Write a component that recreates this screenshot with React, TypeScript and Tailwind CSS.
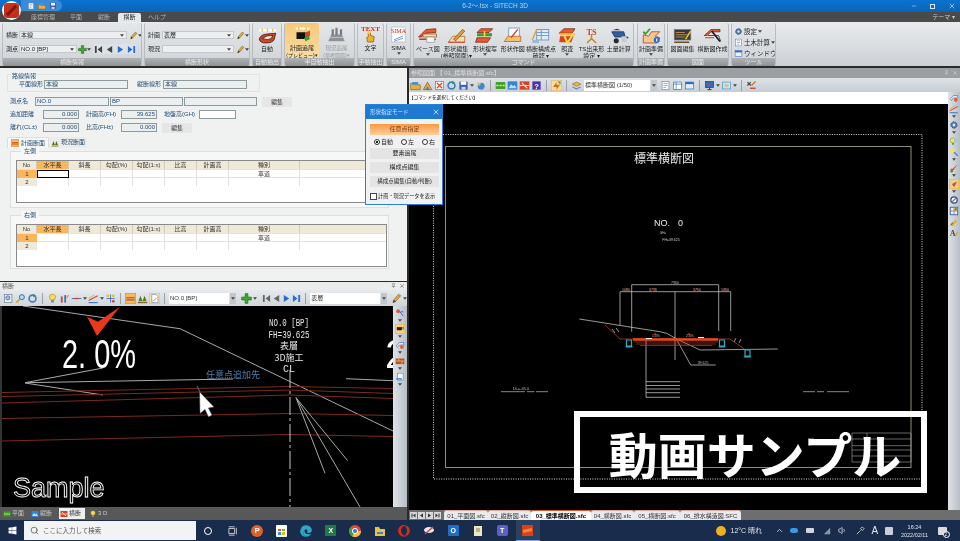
import React from "react";
import clsx from "clsx";
import { FaWindows, FaEdge, FaOpera } from "react-icons/fa";
import { Search, ChevronUp, Volume1, Minus, X, Pin } from "lucide-react";

// small 16x16 toolbar icons
const ICONS: Record<string, React.ReactNode> = {
  folder: (<><path d="M1 5h5l1 2h8v7H1z" fill="#e8b23c" stroke="#8a6a1c" /><path d="M3 3h9v4H3z" fill="#4a90d0" /></>),
  mount: (<><path d="M2 14L8 3l6 11z" fill="#f0a830" stroke="#8a5a10" /><path d="M5 14l3-5 3 5z" fill="#3a7fd0" /></>),
  pdf: (<><rect x="2" y="2" width="12" height="12" fill="#fff" stroke="#777" /><path d="M4 4l8 8M12 4l-8 8" stroke="#d8402a" strokeWidth="1.6" /></>),
  refresh: (<><circle cx="8" cy="8" r="5" fill="none" stroke="#3a80c0" strokeWidth="2.4" /><path d="M9 1l4 3-4 2z" fill="#2a9a4a" /></>),
  save: (<><rect x="2" y="2" width="12" height="12" rx="1" fill="#3b5fb0" /><rect x="4" y="2" width="8" height="5" fill="#fff" /><rect x="5" y="10" width="6" height="4" fill="#cfd6e6" /></>),
  globe: (<><circle cx="9" cy="9" r="5" fill="#3a8ad8" /><path d="M3 3l6 2-3 4z" fill="#e8c040" /></>),
  green: (<><rect x="1" y="3" width="14" height="10" fill="#3aa02c" /><path d="M2 8h3M6.5 8h3M11 8h3" stroke="#ffe860" strokeWidth="2" /></>),
  blue: (<><rect x="1" y="2" width="14" height="12" fill="#2f86d6" /><path d="M2 12l4-6 3 3 2-2 3 5z" fill="#bfe0f8" /></>),
  red: (<><rect x="1" y="2" width="14" height="12" fill="#d8402a" /><path d="M1 8h14M4 4l8 8" stroke="#f6e6c8" strokeWidth="1.6" /></>),
  help: (<><rect x="2" y="2" width="12" height="12" fill="#5030a8" /><text x="8" y="12.5" textAnchor="middle" fontSize="11" fontWeight="700" fill="#fff" fontFamily="Liberation Sans">?</text></>),
  arrowBox: (<><rect x="0" y="0" width="16" height="16" rx="2" fill="#f8dc9c" stroke="#c09a50" /><path d="M3 10l5-7v4h5l-5 7v-4z" fill="#d86a20" /><path d="M10 3h3v3" stroke="#2a9a4a" strokeWidth="1.6" fill="none" /></>),
  layers: (<><path d="M2 6l6-3 6 3-6 3z" fill="#e8c040" stroke="#8a6a1c" /><path d="M2 10l6 3 6-3" fill="none" stroke="#4a80c0" strokeWidth="1.6" /></>),
  doc: (<><rect x="3" y="2" width="10" height="12" fill="#fff" stroke="#6888b8" /><path d="M5 5h6M5 8h6M5 11h4" stroke="#6888b8" /></>),
  table: (<><rect x="2" y="3" width="12" height="11" fill="#fff" stroke="#3a70b8" /><path d="M2 6h12M6 3v11" stroke="#3a70b8" /></>),
  win: (<><rect x="2" y="3" width="12" height="10" fill="#e8eef8" stroke="#3a70b8" /><rect x="2" y="3" width="12" height="3" fill="#2a6ac0" /></>),
  monitor: (<><rect x="2" y="2" width="12" height="9" fill="#2f6fc0" stroke="#1f3a78" /><path d="M8 11v3M5 14h6" stroke="#1f3a78" strokeWidth="1.4" /><path d="M5 5l5 2-3 2z" fill="#e04030" /></>),
  flag: (<><rect x="2" y="3" width="12" height="10" fill="#bfe4f8" stroke="#5a90c0" /><path d="M5 5l7 3-5 3z" fill="#e8c030" /></>),
  tools: (<><path d="M2 3l5 5M7 3l-5 5" stroke="#444" strokeWidth="1.6" /><path d="M8 8l6-6" stroke="#b8801c" strokeWidth="2" /><path d="M6 12h8" stroke="#d8402a" strokeWidth="2" /></>),
  inspect: (<><rect x="2" y="2" width="11" height="12" fill="#eef" stroke="#6a7a90" /><circle cx="7" cy="7" r="3" fill="#9cc4ec" stroke="#3a5a88" /></>),
  lens: (<><circle cx="10" cy="6" r="3.6" fill="#bcdcf8" stroke="#2a68b0" strokeWidth="1.4" /><path d="M7 9l-5 5" stroke="#e8a020" strokeWidth="2.4" /></>),
  bulb: (<><circle cx="8" cy="6" r="4.4" fill="#f6dc60" stroke="#b89018" /><rect x="6" y="10" width="4" height="4" fill="#8a8a8a" /></>),
  bars: (<><path d="M4 14V5" stroke="#d8402a" strokeWidth="2.6" /><path d="M9 14V3" stroke="#3a70c0" strokeWidth="2.6" /><path d="M11 7l3-4" stroke="#e8a020" strokeWidth="2" /></>),
  dash: (<><path d="M1 8h14" stroke="#3a70c0" strokeWidth="1.4" /><path d="M5 8h6" stroke="#d8402a" strokeWidth="2" /></>),
  slope: (<><path d="M1 11L14 4" stroke="#d8402a" strokeWidth="1.6" /><path d="M1 14h13" stroke="#3a70c0" strokeWidth="1.6" /><path d="M1 8L9 3" stroke="#e8a020" strokeWidth="1.2" /></>),
  dots: (<><path d="M8 2v12M2 8h12" stroke="#3a70c0" strokeWidth="1.2" /><circle cx="4" cy="4" r="2" fill="#e8c020" /><circle cx="12" cy="12" r="2" fill="#d8402a" /><circle cx="12" cy="4" r="2" fill="#e8c020" /></>),
  roadHl: (<><rect x="0" y="0" width="16" height="16" rx="1" fill="#f6ba5c" stroke="#b07a20" /><path d="M2 6h12v5H2z" fill="#c8501c" /><path d="M2 8.4h12" stroke="#f6e29c" /></>),
  people: (<><path d="M2 12l3-8 3 8zM8 12l3-8 3 8z" fill="#5a7a10" /><path d="M1 14h14" stroke="#7a5a1c" strokeWidth="1.6" /></>),
  docHl: (<><rect x="0" y="0" width="16" height="16" rx="1" fill="#f8e2ac" stroke="#c8a050" /><path d="M4 2h6l3 3v9H4z" fill="#fff" stroke="#6a88b8" /><path d="M6 12l5-5" stroke="#d86a20" strokeWidth="1.4" /></>),
  plus: (<><path d="M6 1h4v5h5v4h-5v5H6v-5H1V6h5z" fill="#3fa832" stroke="#1f6a1c" /></>),
  pencil: (<><path d="M3 14l1-4 7-8 3 2-7 8z" fill="#e8b030" stroke="#7a5a1c" /><path d="M3 14l1-4 3 2z" fill="#333" /></>),
  pointer: (<><circle cx="5" cy="5" r="3" fill="#e8503a" /><path d="M8 6l5 7M13 6h-4" stroke="#3a70c0" strokeWidth="1.6" /></>),
  roadCar: (<><rect x="0" y="0" width="16" height="16" rx="1" fill="#f8cf80" stroke="#c09a50" /><rect x="3" y="5" width="8" height="5" fill="#222" /><path d="M11 6l3-2v6z" fill="#3a8a3a" /></>),
  cross: (<><path d="M2 9l5-5h7v4H7l-3 4z" fill="#e8e8e8" stroke="#3a70b8" /><circle cx="11" cy="11" r="3" fill="#e85a30" /></>),
  brick: (<><rect x="1" y="4" width="14" height="9" fill="#b8541c" /><path d="M1 8h14M6 4v4M11 8v5" stroke="#f2d6a0" /></>),
  cloudDoc: (<><rect x="4" y="2" width="9" height="11" fill="#f6f8fc" stroke="#6a88b8" /><path d="M2 11h9" stroke="#3a8ad8" strokeWidth="2.4" /></>),
  gear: (<><circle cx="8" cy="8" r="5" fill="#5a80b8" stroke="#28406a" strokeWidth="1.6" strokeDasharray="2 1" /><circle cx="8" cy="8" r="2" fill="#e8eef8" /></>),
  bulbs: (<><circle cx="6" cy="7" r="4" fill="#f4e070" stroke="#8a9a4a" /><circle cx="11" cy="6" r="3" fill="#9acbe8" /><path d="M5 11h3v3H5z" fill="#5a9a4a" /></>),
  bulbFlag: (<><circle cx="6" cy="6" r="4" fill="#f6e070" /><path d="M8 8l6 6" stroke="#4a80c0" strokeWidth="2" /></>),
  check: (<><path d="M2 9l3 5 9-12-8 7z" fill="#e0401f" /><circle cx="4" cy="13" r="2" fill="#3aa02c" /></>),
  checkHl: (<><rect x="0" y="0" width="16" height="16" rx="1" fill="#f8d080" stroke="#c89a40" /><path d="M2 5h12l-4 5H6z" fill="#a8d8f0" /><path d="M5 8l3 5 5-9z" fill="#e0401f" /></>),
  ring: (<><circle cx="8" cy="8" r="5" fill="#fff" stroke="#3a4a68" strokeWidth="2" /><path d="M4 12l8-8" stroke="#5a7ab0" strokeWidth="2" /></>),
  grid: (<><rect x="2" y="2" width="12" height="12" fill="#e8f0e8" stroke="#2a6ab0" strokeWidth="1.4" /><path d="M2 8h12M8 2v12" stroke="#d8402a" /><circle cx="11" cy="5" r="2" fill="#3aa02c" /></>),
  brush: (<><path d="M3 13l7-9 3 3-7 8z" fill="#e8b030" /><path d="M3 13l3-4" stroke="#4a8a2a" strokeWidth="2" /></>),
  letter: (<><text x="6" y="13" textAnchor="middle" fontSize="12" fontWeight="700" fill="#3a3a4a" fontFamily="Liberation Serif">A</text><path d="M10 13l4-7" stroke="#d8a020" strokeWidth="2" /></>),
};

const Ico = ({ n, className = "w-[11px] h-[11px]" }: { n: string; className?: string }) => (
  <svg viewBox="0 0 16 16" className={clsx("shrink-0", className)}>
    {ICONS[n]}
  </svg>
);

const Drop = () => (
  <svg viewBox="0 0 6 4" className="w-[4px] h-[3px] shrink-0">
    <path d="M0 0h6L3 4z" fill="#444" />
  </svg>
);

const Sep = () => <div className="w-px h-[11px] bg-[#9aa0a8] mx-[3px] shrink-0" />;

// large ribbon pictures, 28x22
const BIG: Record<string, React.ReactNode> = {
  auto: (<><path d="M3 4h22" stroke="#fff" strokeWidth="3" /><path d="M7 2v4M14 2v4M21 2v4" stroke="#e8c020" strokeWidth="1.6" /><path d="M3 16q1-6 10-7l12-1-2 8q-2 5-11 5-8 0-9-5z" fill="#d8401f" stroke="#222" /><path d="M7 15q6-5 14-4l-2 4q-5 3-12 0z" fill="#f3e8d0" stroke="#222" /></>),
  plan: (<><path d="M5 3h18" stroke="#fff" strokeWidth="2.4" /><path d="M9 1v4M19 1v4" stroke="#e8c020" strokeWidth="1.6" /><rect x="6" y="8" width="12" height="9" fill="#111" /><path d="M18 8l6-2v7l-6 4z" fill="#d8401f" /><path d="M16 16l6-4 2 5-6 3z" fill="#3a9a3a" /></>),
  ground: (<><path d="M3 20l4-9h14l4 9z" fill="#8e9298" /><path d="M9 4v8M14 2v10M20 4v8" stroke="#7a7e84" strokeWidth="3" /><path d="M3 15h22" stroke="#c8ccd0" /></>),
  hand: (<><path d="M10 21l-1-6 2-1V8q2-1 3 0v4l5 2-1 7z" fill="#efb02c" stroke="#8a5e10" /><circle cx="12" cy="8" r="2.4" fill="#f6d050" /></>),
  sima: (<><rect x="5" y="1" width="18" height="20" fill="#fff" stroke="#b8bcc4" /><path d="M8 18l12-5M8 20l12-4" stroke="#4a80c0" /></>),
  base: (<><path d="M2 13L12 3l13-1v5L11 8l-5 5z" fill="#e85a30" stroke="#7a2010" /><rect x="8" y="9" width="18" height="4" fill="#f4e0b8" stroke="#9a5020" /><path d="M3 16h22" stroke="#b8401c" strokeWidth="2" /><rect x="13" y="13" width="10" height="7" fill="#f6f6f6" stroke="#999" /></>),
  edit: (<><path d="M3 20L9 12h16v8z" fill="#f1dcbc" stroke="#b45a20" /><path d="M10 16l12-13 3 2-12 13z" fill="#e8a030" stroke="#7a4a10" /><path d="M3 20h22" stroke="#d8401f" strokeWidth="1.6" /></>),
  copy: (<><path d="M4 7l5-5h16l-5 5z" fill="#e85a30" stroke="#7a2010" /><rect x="4" y="8" width="20" height="4" fill="#3a9a3a" /><path d="M4 14h18l-4 6H2z" fill="#e85a30" stroke="#7a2010" /><path d="M14 5v8" stroke="#f6e040" strokeWidth="2" /></>),
  draw: (<><rect x="9" y="1" width="14" height="13" fill="#fff" stroke="#5a88c0" /><path d="M3 19l5-7h17v7z" fill="#f3c070" stroke="#b45a20" /><path d="M12 14l9-11" stroke="#d8401f" strokeWidth="1.6" /></>),
  struct: (<><rect x="9" y="3" width="16" height="14" fill="#dfeaf8" stroke="#5a88c0" /><path d="M9 7h16M9 11h16M15 3v14" stroke="#5a88c0" /><path d="M3 17L9 3" stroke="#e8a030" strokeWidth="2" /><rect x="3" y="17" width="9" height="4" fill="#9ab8dc" /></>),
  check: (<><path d="M3 8l6-6h15l-4 6z" fill="#e85a30" stroke="#7a2010" /><rect x="4" y="8" width="20" height="3" fill="#f2c040" /><path d="M4 12h18l-3 8H3z" fill="#d8401f" /><path d="M10 12l4 9 8-13" fill="none" stroke="#f6e040" strokeWidth="2.6" /></>),
  ts: (<><text x="14" y="10" textAnchor="middle" fontSize="11" fontWeight="700" fill="#d8401f" fontFamily="Liberation Serif">TS</text><path d="M14 9v8M8 21l6-6 6 6" stroke="#c8861c" strokeWidth="2" fill="none" /></>),
  barrow: (<><path d="M5 6h16l2 7H9z" fill="#2f5fa0" stroke="#16305a" /><path d="M6 4l6-2 5 2z" fill="#4a3220" /><circle cx="11" cy="18" r="3.4" fill="#2a2a2a" /><path d="M23 13l4 1" stroke="#16305a" strokeWidth="2" /><rect x="18" y="12" width="7" height="8" fill="#c8ccd4" /></>),
  prep: (<><path d="M3 6l3 3 6-7" fill="none" stroke="#3aa02c" strokeWidth="2.4" /><path d="M3 21V10l7 2 4-6h11l-6 6 6 2-4 7z" fill="#f1c890" stroke="#b43a1c" /><circle cx="21" cy="17" r="4" fill="#2a6ac0" /><path d="M21 15v4" stroke="#fff" strokeWidth="1.6" /></>),
  sheet: (<><rect x="3" y="3" width="22" height="14" fill="#3a3a3a" stroke="#777" /><path d="M5 7h12M5 10h16M5 13h12" stroke="#d8a060" /><path d="M18 16l7-11" stroke="#e8c020" strokeWidth="2" /><path d="M3 20h20" stroke="#6a4a2a" strokeWidth="2" /></>),
  make: (<><path d="M3 11l9-8h12v3H12l-5 5z" fill="#e85a30" stroke="#7a2010" /><path d="M8 11h14l3 8" fill="none" stroke="#222" /><path d="M13 5l11 14" stroke="#222" strokeWidth="2.4" /><path d="M4 14h12" stroke="#d8401f" strokeWidth="1.4" /></>),
};

const Big = ({ n, className = "w-[21px] h-[17px]" }: { n: string; className?: string }) => (
  <svg viewBox="0 0 28 22" className={clsx("shrink-0", className)}>
    {BIG[n]}
  </svg>
);

const Group = ({
  title,
  className,
  children,
}: {
  title: string;
  className: string;
  children: React.ReactNode;
}) => (
  <div className={clsx("flex flex-col rounded-[2px] overflow-hidden bg-gradient-to-b from-[#e4e7ea] to-[#cfd3d7] border-x border-[#b8bcc0]", className)}>
    <div className="flex-1 flex min-h-0 overflow-hidden">{children}</div>
    <div className="h-[8px] shrink-0 bg-gradient-to-b from-[#b0b3b5] to-[#8f9294] text-[6px] leading-[8px] text-center text-[#e8e8e8] whitespace-nowrap">{title}</div>
  </div>
);

const RibBtn = ({
  n,
  label,
  sub,
  arrow,
  className,
}: {
  n: string;
  label: string;
  sub?: string;
  arrow?: boolean;
  className: string;
}) => (
  <div className={clsx("flex flex-col items-center pt-[4px] text-[6px] leading-[6.5px] whitespace-nowrap text-[#222]", className)}>
    <Big n={n} />
    <span className="mt-[2px]">{label}</span>
    {sub && <span>{sub}</span>}
    {arrow && <Drop />}
  </div>
);

const Combo = ({ className, text }: { className: string; text?: string }) => (
  <div className={clsx("flex items-center justify-between h-[8px] bg-[#eceef0] border border-[#c4c8cc] text-[6px] leading-[7px] text-[#222] pl-px pr-[2px] whitespace-nowrap", className)}>
    <span>{text}</span>
    <Drop />
  </div>
);

const Nav = ({ d, color }: { d: string; color: string }) => (
  <svg viewBox="0 0 10 10" className="w-[9px] h-[9px] shrink-0">
    <path d={d} fill={color} />
  </svg>
);
const FIRST = "M1 1h2v8H1zM9 1v8L4 5z";
const PREV = "M8 1v8L2 5z";
const NEXT = "M2 1v8l6-4z";
const LAST = "M1 1v8l5-4zM7 1h2v8H7z";

const Ribbon = () => (
  <div className="flex gap-[2px] h-[44px] pl-[2px] pt-px bg-gradient-to-b from-[#e9ecef] to-[#ccd0d4]">
    <Group title="横断情報" className="w-[140px]">
      <div className="flex flex-col gap-[6px] pl-[3px] pt-[8px] text-[6px] leading-[8px] text-[#222] whitespace-nowrap">
        <div className="flex items-center h-[8px]">
          <span className="w-[13px]">横断</span>
          <Combo className="w-[108px]" text="本線" />
          <Ico n="pencil" className="w-[9px] h-[9px] ml-[2px]" />
          <Drop />
        </div>
        <div className="flex items-center h-[8px]">
          <span className="w-[13px]">測点</span>
          <Combo className="w-[58px]" text="NO.0 [BP]" />
          <Ico n="plus" className="w-[9px] h-[9px] ml-[1px]" />
          <Drop />
          <div className="flex gap-[2px] ml-[2px] pl-px h-[10px] items-center bg-[#dde2e6] rounded-[2px]">
            <Nav d={FIRST} color="#444" />
            <Nav d={PREV} color="#444" />
            <Nav d={NEXT} color="#2a6ad8" />
            <Nav d={LAST} color="#2a6ad8" />
          </div>
        </div>
      </div>
    </Group>
    <Group title="横断形状" className="w-[106px]">
      <div className="flex flex-col gap-[6px] pl-[3px] pt-[8px] text-[6px] leading-[8px] text-[#222] whitespace-nowrap">
        <div className="flex items-center h-[8px]">
          <span className="w-[14px]">計画</span>
          <Combo className="w-[72px]" text="表層" />
          <Ico n="pencil" className="w-[9px] h-[9px] ml-[2px]" />
          <Drop />
        </div>
        <div className="flex items-center h-[8px]">
          <span className="w-[14px]">現況</span>
          <Combo className="w-[72px]" />
          <Ico n="pencil" className="w-[9px] h-[9px] ml-[2px]" />
          <Drop />
        </div>
      </div>
    </Group>
    <Group title="自動抽出" className="w-[30px]">
      <RibBtn n="auto" label="自動" className="w-full" />
    </Group>
    <Group title="半自動抽出" className="w-[71px]">
      <div className="flex flex-col items-center w-[34px] shrink-0 pt-[3px] rounded-[2px] bg-gradient-to-b from-[#f8c878] to-[#f6dca4] text-[6px] leading-[6.5px] text-[#222] whitespace-nowrap">
        <Big n="plan" />
        <span className="mt-[2px]">計画追尾</span>
        <span className="text-[5px]">(プレビュー)▾</span>
      </div>
      <div className="flex flex-col items-center flex-1 pt-[3px] text-[5.5px] leading-[6.5px] text-[#9a9a9a] whitespace-nowrap">
        <Big n="ground" />
        <span className="mt-[2px]">現況追尾</span>
        <span className="text-[5px]">(参考図面)▾</span>
      </div>
    </Group>
    <Group title="手動抽出" className="w-[27px]">
      <div className="flex flex-col items-center w-full pt-[3px] text-[6px] leading-[7px] text-[#222]">
        <div className="relative h-[17px] w-[22px] flex justify-center">
          <Big n="hand" />
          <span className="absolute -top-[1px] left-0 right-0 text-center font-['Liberation_Serif',serif] font-bold text-[7px] leading-[8px] text-[#e02a10]">TEXT</span>
        </div>
        <span className="mt-[2px]">文字</span>
      </div>
    </Group>
    <Group title="SIMA" className="w-[25px]">
      <div className="flex flex-col items-center w-full pt-[3px] text-[6px] leading-[7px] text-[#222]">
        <div className="relative h-[17px] w-[22px] flex justify-center">
          <Big n="sima" />
          <span className="absolute top-[2px] left-0 right-0 text-center font-['Liberation_Serif',serif] text-[6px] leading-[7px] text-[#d81a10]">SIMA</span>
        </div>
        <span className="mt-[2px]">SIMA</span>
        <Drop />
      </div>
    </Group>
    <Group title="コマンド" className="w-[221px]">
      <RibBtn n="base" label="ベース図" arrow className="w-[28px]" />
      <RibBtn n="edit" label="形状編集" sub="(参照図面)▾" className="w-[29px]" />
      <RibBtn n="copy" label="形状複写" arrow className="w-[29px]" />
      <RibBtn n="draw" label="形状作図" className="w-[27px]" />
      <RibBtn n="struct" label="横断構成点" sub="確認 ▾" className="w-[30px]" />
      <RibBtn n="check" label="照査" arrow className="w-[23px]" />
      <RibBtn n="ts" label="TS出来形" sub="設定 ▾" className="w-[26px]" />
      <RibBtn n="barrow" label="土量計算" className="w-[29px]" />
    </Group>
    <Group title="計画準備" className="w-[28px] ml-px">
      <RibBtn n="prep" label="計画準備" arrow className="w-full" />
    </Group>
    <Group title="図面" className="w-[62px]">
      <RibBtn n="sheet" label="図面編集" className="w-[30px]" />
      <RibBtn n="make" label="横断図作成" className="w-[32px]" />
    </Group>
    <Group title="ツール" className="w-[45px]">
      <div className="flex flex-col gap-[2px] pl-[2px] pt-[4px] text-[6.5px] leading-[9px] text-[#222] whitespace-nowrap">
        <div className="flex items-center gap-[1px]"><Ico n="gear" className="w-[9px] h-[9px]" />設定 <Drop /></div>
        <div className="flex items-center gap-[1px]"><Ico n="doc" className="w-[9px] h-[9px]" />土木計算 <Drop /></div>
        <div className="flex items-center gap-[1px]"><Ico n="win" className="w-[9px] h-[9px]" />ウィンドウ <Drop /></div>
      </div>
    </Group>
  </div>
);

const Field = ({
  className,
  children,
  white,
  right,
}: {
  className: string;
  children?: React.ReactNode;
  white?: boolean;
  right?: boolean;
}) => (
  <div
    className={clsx(
      "h-[9px] shrink-0 border border-[#8c9a9a] text-[6px] leading-[7px] text-[#1f4a70] px-px whitespace-nowrap",
      white ? "bg-white" : "bg-[#eceff0]",
      right && "text-right",
      className,
    )}
  >
    {children}
  </div>
);

const Lbl = ({ className, children }: { className: string; children: React.ReactNode }) => (
  <span className={clsx("shrink-0 text-[6px] leading-[9px] text-[#1f4a70] whitespace-nowrap", className)}>{children}</span>
);

const EditBtn = ({ className }: { className: string }) => (
  <div className={clsx("h-[10px] shrink-0 bg-[#e6e6e6] text-[6px] leading-[10px] text-center text-[#333] rounded-[1px]", className)}>編集</div>
);

const HEADS = ["水平長", "斜長", "勾配(%)", "勾配(1:x)", "比高", "計画高"];

const SlopeGrid = ({ active }: { active?: boolean }) => (
  <div className="mx-[5px] mt-[8px] w-[371px] h-[43px] border border-[#8a8a8a] bg-white text-[6px] leading-[8px] text-[#333] whitespace-nowrap">
    <div className="grid grid-cols-[20px_32px_32px_32px_32px_32px_32px_71px_1fr] h-[8px] bg-[#efe9d8] text-center">
      <div className="border-r border-[#cfcabb]">No</div>
      {HEADS.map((h, i) => (
        <div key={h} className={clsx("border-r border-[#cfcabb]", i === 0 && "bg-[#f9b65a]")}>{h}</div>
      ))}
      <div className="border-r border-[#cfcabb]">種別</div>
      <div />
    </div>
    {[1, 2].map((r) => (
      <div key={r} className="grid grid-cols-[20px_32px_32px_32px_32px_32px_32px_71px] h-[8px] text-center border-t border-[#e2e2e2]">
        <div className={r === 1 ? "bg-[#f9b65a]" : "bg-[#efe9d8]"}>{r}</div>
        <div className={clsx("border-r border-[#e0e0e0]", active && r === 1 && "outline-[1.5px] outline-black -outline-offset-1")} />
        {[0, 1, 2, 3, 4].map((c) => (
          <div key={c} className="border-r border-[#e0e0e0]" />
        ))}
        <div className="border-r border-[#e0e0e0]">{r === 1 ? "車道" : ""}</div>
      </div>
    ))}
  </div>
);

const Side = ({ title, className, children }: { title: string; className: string; children: React.ReactNode }) => (
  <div className={clsx("relative border border-[#dedede] ml-[3px] w-[379px] bg-[#f7f7f7]", className)}>
    <span className="absolute -top-[5px] left-[10px] px-[3px] bg-[#f7f7f7] text-[6px] leading-[9px] text-[#1f4a70]">{title}</span>
    {children}
  </div>
);

const FormPanel = () => (
  <div className="h-[213px] bg-[#f0f1f1] flex flex-col pl-[7px] pt-[6px]">
    <div className="relative w-[253px] h-[18px] border border-[#e2e4e4] flex items-start pt-[5px]">
      <span className="absolute -top-[3px] left-[3px] px-px bg-[#f0f1f1] text-[6px] leading-[8px] text-[#1f4a70]">路線情報</span>
      <Lbl className="ml-[11px] w-[25px]">平面線形</Lbl>
      <Field className="w-[84px]">本線</Field>
      <Lbl className="ml-[9px] w-[26px]">縦断線形</Lbl>
      <Field className="w-[84px]">本線</Field>
    </div>
    <div className="flex items-center h-[9px] mt-[5px] pl-[3px]">
      <Lbl className="w-[25px]">測点名</Lbl>
      <Field className="w-[74px]">NO.0</Field>
      <Field className="w-[73px] ml-px">BP</Field>
      <Field className="w-[73px] ml-px" />
      <EditBtn className="w-[30px] ml-[5px]" />
    </div>
    <div className="flex items-center h-[9px] mt-[4px] pl-[3px]">
      <Lbl className="w-[33px]">追加距離</Lbl>
      <Field className="w-[36px]" right>0.000</Field>
      <Lbl className="w-[42px] pl-[7px]">計画高(FH)</Lbl>
      <Field className="w-[36px]" right>39.625</Field>
      <Lbl className="w-[42px] pl-[7px]">地盤高(GH)</Lbl>
      <Field className="w-[37px]" white />
    </div>
    <div className="flex items-center h-[9px] mt-[4px] pl-[3px]">
      <Lbl className="w-[33px]">離れ(CL±)</Lbl>
      <Field className="w-[36px]" right>0.000</Field>
      <Lbl className="w-[42px] pl-[7px]">比高(FH±)</Lbl>
      <Field className="w-[36px]" right>0.000</Field>
      <EditBtn className="w-[30px] ml-[5px]" />
    </div>
    <div className="flex h-[11px] mt-[5px] text-[6px] leading-[11px] text-[#1f4a70] whitespace-nowrap">
      <div className="flex items-center gap-[2px] w-[42px] pl-[3px] bg-[#f7f7f7] rounded-t-[2px] border-x border-t border-[#dcdcdc]">
        <Ico n="roadHl" className="w-[8px] h-[8px]" />計画断面
      </div>
      <div className="flex items-center gap-[2px] w-[38px] pl-[2px] bg-[#ececec] rounded-t-[2px]">
        <Ico n="people" className="w-[8px] h-[8px]" />現況断面
      </div>
    </div>
    <Side title="左側" className="h-[57px] mt-[3px]">
      <SlopeGrid active />
    </Side>
    <Side title="右側" className="h-[54px] mt-[7px]">
      <SlopeGrid />
    </Side>
  </div>
);

const TOOLS_LEFT = (
  <div className="flex items-center gap-[1px] h-[16px] pl-[3px] bg-gradient-to-b from-[#e6eaee] to-[#cfd5da] text-[6px] text-[#333] whitespace-nowrap">
    <Ico n="inspect" />
    <Ico n="lens" />
    <Ico n="refresh" />
    <Sep />
    <Ico n="bulb" />
    <Ico n="bars" />
    <Ico n="dash" /><Drop />
    <Ico n="slope" /><Drop />
    <Ico n="dots" />
    <Sep />
    <Ico n="roadHl" />
    <Ico n="people" />
    <Ico n="docHl" />
    <Sep />
    <div className="flex items-center w-[65px] h-[11px] bg-white pl-px">NO.0 [BP]</div>
    <div className="flex items-center justify-center w-[6px] h-[11px] bg-[#c4c8cc] mr-[4px]"><Drop /></div>
    <Ico n="plus" /><Drop />
    <div className="w-[4px]" />
    <Nav d={FIRST} color="#666" />
    <Nav d={PREV} color="#666" />
    <Nav d={NEXT} color="#2a6ad8" />
    <Nav d={LAST} color="#2a6ad8" />
    <Sep />
    <div className="flex items-center w-[76px] h-[11px] bg-white pl-px">表層</div>
    <div className="flex items-center justify-center w-[6px] h-[11px] bg-[#c4c8cc] mr-[3px]"><Drop /></div>
    <Ico n="pencil" /><Drop />
  </div>
);

const SideBar = ({ items, className }: { items: string[]; className: string }) => (
  <div className={clsx("flex flex-col items-center bg-gradient-to-r from-[#dfe3e8] to-[#b8bec6]", className)}>
    {items.map((n, i) =>
      n === "sep" ? (
        <div key={i} className="h-[5px] flex items-center"><Drop /></div>
      ) : (
        <Ico key={i} n={n} className="w-[10px] h-[10px] my-[0.5px]" />
      ),
    )}
  </div>
);

// profile view, page coordinates via the viewBox
const ProfileCanvas = () => (
  <svg viewBox="2 306 391 201" className="w-[391px] h-[201px] bg-black" fill="none">
    <path d="M23 306L180 328.7L393 431" stroke="#a8a8a8" />
    <path d="M25 382.7L103 368M25 382.7L233 379M25 383L103 395M346 378.7L393 380.7" stroke="#aaa" />
    <g stroke="#7c2a1e">
      <path d="M2 392.5L290 386.5L393 388.5" />
      <path d="M2 396.5L290 390L393 393.5" />
      <path d="M2 403L290 395L393 398.5" />
      <path d="M2 418.5L290 413.5L393 415.5" />
      <path d="M2 441L290 434.5L393 436.5" />
    </g>
    <path d="M290 370V507" stroke="#c8c8c8" strokeDasharray="18 3 3 3" />
    <path d="M296 397.7L325 473.3M296 397.7L347.7 460.7M296 397.7L360 507" stroke="#a8a8a8" />
    <path d="M87 316.7L97 336L120 306.7L98 321.7Z" fill="#e8391a" />
    <g fill="#e8e8e8" fontFamily="Liberation Mono" fontSize="10" textAnchor="middle">
      <text x="289" y="326" textLength="40" lengthAdjust="spacingAndGlyphs">NO.0 [BP]</text>
      <text x="289" y="337.5" textLength="41" lengthAdjust="spacingAndGlyphs">FH=39.625</text>
      <text x="289" y="349" fontFamily="Noto Sans CJK JP" fontSize="9">表層</text>
      <text x="289" y="360.5" fontFamily="Noto Sans CJK JP" fontSize="9">3D施工</text>
      <text x="289" y="372">CL</text>
    </g>
    <g fill="#fff" fontFamily="Liberation Sans" fontSize="40">
      <text x="62" y="368" textLength="74" lengthAdjust="spacingAndGlyphs">2. 0%</text>
      <text x="385" y="368">2</text>
    </g>
    <text x="206" y="377.5" fill="#4d7fb0" fontSize="9" fontFamily="Noto Sans CJK JP">任意点追加先</text>
    <path d="M197 386L200 392" stroke="#4d7fb0" />
    <path d="M199.5 391.7L200 413.5L205 409.5L208.5 417L212 415L208.5 408L214 407Z" fill="#fff" stroke="#333" strokeWidth="0.5" />
    <text x="13" y="497" fill="#000" stroke="#fff" strokeWidth="0.9" fontSize="27" fontFamily="Liberation Sans">Sample</text>
  </svg>
);

// standard cross section sheet
const SheetCanvas = () => (
  <svg viewBox="409 104 539 406" className="w-[539px] h-[406px] bg-black" fill="none">
    <rect x="433.5" y="134.5" width="488.5" height="344.5" stroke="#ddd" strokeDasharray="1 1.4" />
    <rect x="445.5" y="146.5" width="465.5" height="321" stroke="#8f8f78" />
    <text x="664" y="163" fill="#e8e8e8" textAnchor="middle" fontSize="12" fontFamily="Noto Sans CJK JP">標準横断図</text>
    <text x="654" y="226" fill="#eee" fontSize="9" fontFamily="Liberation Sans">NO.</text>
    <text x="678" y="226" fill="#eee" fontSize="9" fontFamily="Liberation Sans">0</text>
    <text x="663" y="233.5" fill="#ccc" textAnchor="middle" fontSize="3" fontFamily="Liberation Sans">GH=</text>
    <text x="671" y="240.5" fill="#ccc" textAnchor="middle" fontSize="3.5" fontFamily="Liberation Sans">FH=39.625</text>
    <g stroke="#d8d8d8" strokeWidth="0.7">
      <path d="M631.7 331.7V284.7H718.7V331" />
      <path d="M620 325V291.7H730.7V331" />
      <path d="M675 292V360" />
      <path d="M579.3 319L631.7 327.3L660 331.7L666.7 333.3L676.7 339L700 350L777.7 349" />
      <path d="M646 339V397.3H680M646 381.7H680M646 385.5H680M646 389H680M646 392.7H680" />
      <path d="M677.3 340.7L690.7 365H715.7" />
      <path d="M612 329l3 4M616 328l3 4M734 342l2 -4M739 343l2 -4" />
    </g>
    <path d="M605 325L620 339H730L744 348.7" stroke="#c0341c" strokeWidth="0.8" />
    <path d="M633 339.5H718" stroke="#ea4a18" strokeWidth="2.4" />
    <path d="M634 342H718M636 344H716M640 345.5H712" stroke="#b03a20" strokeWidth="0.7" />
    <path d="M646 338.5h6M698 337.5h6" stroke="#eee" strokeWidth="1.2" />
    <g stroke="#35a8c0" strokeWidth="1.2">
      <path d="M626.5 340h5v6h-5zM625.5 347h7" />
      <path d="M719.5 340h5v6h-5zM718.5 347h7" />
      <path d="M745 350h5v6h-5zM744 357h7" />
    </g>
    <g fill="#bbb" fontSize="3.5" fontFamily="Liberation Sans" textAnchor="middle">
      <text x="675" y="284">7500</text>
      <text x="626" y="291">1000</text>
      <text x="653" y="291">3750</text>
      <text x="697" y="291">3750</text>
      <text x="725" y="291">1000</text>
      <text x="656" y="337">1.0%</text>
      <text x="690" y="337">2.0%</text>
      <text x="703" y="364">39.625</text>
      <text x="521" y="390" fontSize="4">DL=-35.0</text>
    </g>
    <path d="M675 281l1 1h-2zM627 288l1 1h-2zM655 288l1 1h-2zM697 288l1 1h-2zM725 288l1 1h-2zM655 333l1 2h-2zM689 333l1 2h-2z" fill="#e03020" stroke="#e03020" strokeWidth="0.5" />
    <path d="M501 391.7h24M527 391.7h7.5M536 391.7h12M803 391.7h12M817 391.7h7M827 391.7h22" stroke="#aaa" strokeWidth="0.8" />
    <path d="M852 433H911V462H852ZM852 439H911M852 445.7H911M852 450H911M852 456H911M867 433V462" stroke="#aaa" strokeWidth="0.6" />
  </svg>
);

const FILE_TABS = [
  { t: "01_平面図.sfc", w: "w-[44px]" },
  { t: "02_縦断図.sfc", w: "w-[43px]" },
  { t: "03_標準横断図.sfc", w: "w-[60px]", on: true },
  { t: "04_横断図.sfc", w: "w-[43px]" },
  { t: "05_横断図.sfc", w: "w-[46px]" },
  { t: "06_排水構造図.SFC", w: "w-[61px]" },
];

const TaskIcon = ({ children }: { children: React.ReactNode }) => (
  <div className="w-[24.5px] h-full flex items-center justify-center shrink-0">{children}</div>
);

const Taskbar = () => (
  <div className="flex items-center h-[21px] bg-[#1a2c4c] text-white">
    <div className="w-[24px] flex justify-center"><FaWindows className="w-[9px] h-[9px]" /></div>
    <div className="flex items-center gap-[4px] w-[172px] h-[19px] bg-[#f2f3f5] pl-[6px] text-[6.5px] text-[#555]">
      <Search className="w-[9px] h-[9px]" strokeWidth={2} />
      ここに入力して検索
    </div>
    <div className="flex items-center h-full">
      <TaskIcon><div className="w-[8px] h-[8px] rounded-full border-[1.5px] border-white" /></TaskIcon>
      <TaskIcon>
        <svg viewBox="0 0 12 12" className="w-[10px] h-[10px]"><path d="M1 3h7v6H1zM10 2v8M1 1h7M1 11h7" stroke="#ddd" fill="none" /></svg>
      </TaskIcon>
      <TaskIcon><div className="w-[12px] h-[12px] rounded-full bg-[#e0612c] text-[8px] leading-[12px] text-center font-bold">P</div></TaskIcon>
      <TaskIcon>
        <div className="w-[11px] h-[12px] bg-white rounded-[1px] grid grid-cols-2 gap-px p-[2px] pt-[4px]">
          <div className="bg-[#e0512c]" /><div className="bg-[#7ab82a]" /><div className="bg-[#2a9ae0]" /><div className="bg-[#f0b820]" />
        </div>
      </TaskIcon>
      <TaskIcon><FaEdge className="w-[12px] h-[12px] text-[#2fa8c8]" /></TaskIcon>
      <TaskIcon><div className="w-[11px] h-[11px] bg-[#1f7a45] text-[7px] leading-[11px] text-center font-bold">X</div></TaskIcon>
      <TaskIcon>
        <svg viewBox="0 0 12 12" className="w-[12px] h-[12px]">
          <circle cx="6" cy="6" r="6" fill="#e04a3a" />
          <path d="M6 6L12 6A6 6 0 0 1 3 11.2Z" fill="#f4c430" />
          <path d="M6 6L3 11.2A6 6 0 0 1 1 2.7Z" fill="#3aa04a" />
          <circle cx="6" cy="6" r="2.6" fill="#3a7ad8" stroke="#fff" />
        </svg>
      </TaskIcon>
      <TaskIcon>
        <svg viewBox="0 0 12 12" className="w-[12px] h-[12px]"><path d="M1 2h4l1 2h5v7H1z" fill="#f0c040" /><rect x="3" y="7" width="6" height="2" fill="#2f86d6" /></svg>
      </TaskIcon>
      <TaskIcon><FaOpera className="w-[12px] h-[12px] text-[#e02a1a]" /></TaskIcon>
      <TaskIcon>
        <svg viewBox="0 0 12 12" className="w-[12px] h-[12px]"><ellipse cx="6" cy="5" rx="5" ry="3" fill="#e8e8f0" /><path d="M2 9l8-7" stroke="#c84a3a" strokeWidth="1.5" /></svg>
      </TaskIcon>
      <TaskIcon><div className="w-[11px] h-[11px] bg-[#1f6fc8] text-[7px] leading-[11px] text-center font-bold rounded-[1px]">O</div></TaskIcon>
      <TaskIcon>
        <svg viewBox="0 0 12 12" className="w-[12px] h-[12px]"><rect x="2" y="1" width="8" height="10" fill="#f2e6c0" /><path d="M4 4h4M4 6h4" stroke="#8a7a4a" /></svg>
      </TaskIcon>
      <TaskIcon><div className="w-[11px] h-[11px] bg-[#5a62c4] text-[7px] leading-[11px] text-center font-bold rounded-[2px]">T</div></TaskIcon>
      <div className="w-[24px] h-full ml-px flex items-center justify-center bg-[#2c4060] border-b border-[#7aa6d8]">
        <div className="w-[11px] h-[11px] bg-[#d8401f] flex items-center justify-center">
          <div className="w-[9px] h-[3px] bg-[#f08a30] -rotate-12" />
        </div>
      </div>
    </div>
    <div className="flex items-center ml-[176px] text-[7px] leading-[9px] text-[#e2e6ec] whitespace-nowrap">
      <div className="w-[10px] h-[10px] rounded-full bg-[#f0b020]" />
      <span className="ml-[5px] w-[44px]">12°C 晴れ</span>
      <ChevronUp className="w-[9px] h-[9px]" />
      <div className="w-[8px] h-[5px] ml-[6px] rounded-full bg-[#3a9ae8]" />
      <div className="w-[8px] h-[5px] ml-[8px] rounded-[1px] bg-[#d0d6de]" />
      <svg viewBox="0 0 10 10" className="w-[8px] h-[8px] ml-[9px]"><path d="M1 9L9 1v8z" fill="#8a96a8" /></svg>
      <Volume1 className="w-[9px] h-[9px] ml-[7px]" />
      <svg viewBox="0 0 10 10" className="w-[9px] h-[9px] ml-[9px]"><path d="M1 9l4-4M5 3l2-2 2 2-2 2z" stroke="#c8ced8" fill="none" /></svg>
      <span className="ml-[7px] w-[8px] text-[10px]">A</span>
      <div className="w-[8px] h-[8px] ml-[5px] rounded-[1px] bg-[#c8ced8]" />
      <div className="ml-[3px] w-[38px] text-center text-[5.5px] leading-[8px]">
        <div>16:24</div>
        <div>2022/02/11</div>
      </div>
      <div className="relative ml-[4px] w-[9px] h-[8px] bg-[#d8dce2] rounded-[1px]">
        <span className="absolute -bottom-[3px] -right-[3px] w-[7px] h-[7px] rounded-full bg-[#1a2c4c] border border-white text-[4.5px] leading-[5px] text-center">2</span>
      </div>
    </div>
  </div>
);

const ShapeDialog = () => (
  <div className="absolute left-[365px] top-[104px] w-[78px] h-[101px] bg-[#f0f1f2] border border-[#2a7fd0] text-[6px] leading-[10px] text-[#222] z-10 whitespace-nowrap">
    <div className="flex items-center justify-between h-[14px] bg-[#1e7ad0] pl-[4px] pr-[2px] text-[5.5px] text-[#cfe4f8]">
      形状指定モード
      <X className="w-[8px] h-[8px] text-white" />
    </div>
    <div className="flex flex-col pl-[4px] pr-[3px] pt-[5px] text-center">
      <div className="h-[11px] bg-gradient-to-b from-[#fa9a3c] to-[#fccd9a] text-[#7a3a10]">任意点指定</div>
      <div className="flex items-center justify-around h-[13px]">
        <span className="flex items-center gap-px"><span className="w-[6px] h-[6px] rounded-full border border-[#333] bg-[radial-gradient(#222_40%,#fff_45%)]" />自動</span>
        <span className="flex items-center gap-px"><span className="w-[6px] h-[6px] rounded-full border border-[#333] bg-white" />左</span>
        <span className="flex items-center gap-px"><span className="w-[6px] h-[6px] rounded-full border border-[#333] bg-white" />右</span>
      </div>
      <div className="h-[11px] bg-[#e4e4e4] mb-[3px]">要素追尾</div>
      <div className="h-[11px] bg-[#e4e4e4] mb-[3px]">構成点編集</div>
      <div className="h-[11px] bg-[#e4e4e4] text-[5.5px]">構成点編集(自動/判断)</div>
      <div className="flex items-center gap-px mt-[4px] text-[5.2px]">
        <span className="w-[7px] h-[7px] border border-[#444] bg-white shrink-0" />
        計画・現況データを表示
      </div>
    </div>
  </div>
);

const App = () => {
  return (
    <div className="relative w-[960px] h-[541px] overflow-hidden flex flex-col bg-[#333] font-['Liberation_Sans','Noto_Sans_CJK_JP',sans-serif] blur-[0.35px]">
      {/* title bar */}
      <div className="relative flex items-center justify-center h-[12px] bg-gradient-to-b from-[#0a74d0] to-[#0a64b8] text-[6.5px] text-[#b8d4ec] pl-[30px]">
        <div className="absolute left-[21px] top-0 w-[41px] h-[11px] rounded-r-full bg-[#3a8ad8] flex items-center pl-[6px] gap-[3px]">
          <Ico n="doc" className="w-[8px] h-[8px]" />
          <Ico n="folder" className="w-[8px] h-[8px]" />
          <Ico n="save" className="w-[8px] h-[8px]" />
        </div>
        <span>6-2〜.tsx - SITECH 3D</span>
        <div className="absolute right-[4px] top-0 h-[12px] flex items-center gap-[13px] text-[#dbe9f6]">
          <Minus className="w-[6px] h-[6px]" />
          <div className="w-[5px] h-[5px] border border-[#dbe9f6]" />
          <X className="w-[8px] h-[8px]" />
        </div>
      </div>
      {/* app button over the ribbon */}
      <div className="absolute left-[2px] top-[1px] z-10 w-[19px] h-[19px] rounded-full bg-white p-[2px] shadow">
        <div className="w-full h-full rounded-[3px] bg-[#c8301c] overflow-hidden flex items-center justify-center">
          <div className="w-[13px] h-[3px] bg-[#7a1c10] -rotate-45" />
        </div>
      </div>
      {/* ribbon tabs */}
      <div className="flex items-end h-[10px] bg-[#4a4a4a] text-[6px] leading-[9px] text-[#b4b4b4] pl-[30px] whitespace-nowrap">
        <span className="w-[26px] text-center">座標管理</span>
        <span className="w-[30px] ml-[5px] text-center">平面</span>
        <span className="w-[26px] text-center">縦断</span>
        <span className="w-[23px] ml-px bg-[#e6e9ec] rounded-t-[2px] text-center text-[#222]">横断</span>
        <span className="w-[30px] ml-px text-center">ヘルプ</span>
        <span className="ml-auto mr-[5px] text-[6px] text-[#ccc]">テーマ ▾</span>
      </div>
      <Ribbon />
      <div className="h-[2px] bg-[#2a2a2a]" />
      <div className="flex h-[452px]">
        {/* left side */}
        <div className="flex flex-col w-[407px] shrink-0">
          <FormPanel />
          <div className="h-px bg-[#2a2a2a]" />
          <div className="flex items-center justify-between h-[8px] bg-[#ececec] px-[2px] text-[6px] text-[#555]">
            横断
            <span className="flex gap-[3px]"><Pin className="w-[5px] h-[5px]" /><X className="w-[6px] h-[6px]" /></span>
          </div>
          {TOOLS_LEFT}
          <div className="flex h-[201px] pl-[2px]">
            <ProfileCanvas />
            <SideBar
              className="w-[14px] pt-[1px]"
              items={["pointer", "sep", "roadCar", "sep", "cross", "sep", "brick", "sep", "cloudDoc", "sep"]}
            />
          </div>
          <div className="flex items-center gap-[4px] h-[13px] bg-[#585858] pl-[3px] text-[6px] text-[#c8c8c8] whitespace-nowrap">
            <span className="flex items-center gap-[1px] w-[24px]"><Ico n="green" className="w-[8px] h-[8px]" />平面</span>
            <span className="flex items-center gap-[1px] w-[24px]"><Ico n="blue" className="w-[8px] h-[8px]" />縦断</span>
            <span className="flex items-center gap-[1px] w-[26px] h-[11px] pl-px bg-[#f0f0f0] text-[#333]"><Ico n="red" className="w-[8px] h-[8px]" />横断</span>
            <span className="flex items-center gap-[1px]"><Ico n="bulb" className="w-[8px] h-[8px]" />3 D</span>
          </div>
        </div>
        <div className="w-[2px] bg-[#2a2a2a] shrink-0" />
        {/* right side */}
        <div className="flex flex-col flex-1 min-w-0">
          <div className="flex items-center justify-between h-[10px] bg-[#9c9fa2] px-[2px] text-[6px] text-[#dedede]">
            参照図面 【 01_標準横断図.sfc】
            <span className="flex gap-[3px]"><Pin className="w-[5px] h-[5px]" /><X className="w-[6px] h-[6px]" /></span>
          </div>
          <div className="flex items-center gap-[1px] h-[14px] pl-[1px] bg-gradient-to-b from-[#dfe3e8] to-[#c8cdd4] text-[6px] text-[#333] whitespace-nowrap">
            <Ico n="folder" />
            <Ico n="mount" />
            <Ico n="pdf" />
            <Ico n="refresh" />
            <Ico n="save" /><Drop />
            <Ico n="globe" />
            <Sep />
            <Ico n="green" />
            <Ico n="blue" />
            <Ico n="red" />
            <Ico n="help" />
            <Sep />
            <Ico n="arrowBox" />
            <Sep />
            <Ico n="layers" />
            <div className="flex items-center w-[66px] h-[11px] bg-white pl-px ml-[1px]">標準横断図 (1/50)</div>
            <div className="flex items-center justify-center w-[6px] h-[11px] bg-[#c4c8cc] mr-[2px]"><Drop /></div>
            <Ico n="doc" />
            <Ico n="table" />
            <Ico n="win" />
            <Sep />
            <Ico n="monitor" /><Drop />
            <Ico n="flag" /><Drop />
            <Sep />
            <Ico n="tools" />
          </div>
          <div className="flex h-[12px]">
            <div className="flex-1 bg-white text-[4.6px] leading-[12px] text-black whitespace-nowrap">【コマンドを選択してください】</div>
            <div className="w-[12px] bg-[#cfd3d9]" />
          </div>
          <div className="flex h-[406px]">
            <SheetCanvas />
            <SideBar
              className="w-[12px] -mt-[12px] h-[418px]"
              items={["cross", "slope", "sep", "gear", "sep", "bulbs", "bulbFlag", "sep", "check", "sep", "checkHl", "sep", "ring", "grid", "brush", "letter"]}
            />
          </div>
          <div className="flex h-[10px] bg-[#6e6e6e] text-[6px] leading-[10px] text-[#333] whitespace-nowrap">
            <div className="flex items-center gap-px w-[35px] pl-[1px]">
              {[FIRST, PREV, NEXT, LAST].map((d) => (
                <div key={d} className="w-[7px] h-[7px] bg-[#d8d8d8] flex items-center justify-center">
                  <svg viewBox="0 0 10 10" className="w-[5px] h-[5px]"><path d={d} fill="#333" /></svg>
                </div>
              ))}
            </div>
            {FILE_TABS.map((f) => (
              <div
                key={f.t}
                className={clsx(
                  "text-center rounded-t-[3px] border-t overflow-hidden",
                  f.w,
                  f.on ? "bg-white font-bold text-black border-[#e8502a]" : "bg-[#e8eaec] border-[#e8a898]",
                )}
              >
                {f.t}
              </div>
            ))}
          </div>
        </div>
      </div>
      <Taskbar />
      <ShapeDialog />
      {/* caption burnt into the video */}
      <div className="absolute left-[574px] top-[411px] w-[353px] h-[82px] border-[6px] border-white flex items-center justify-center pl-[9px] text-white font-['Noto_Sans_CJK_JP',sans-serif] font-bold text-[49px] leading-none z-10 whitespace-nowrap">
        動画サンプル
      </div>
    </div>
  );
};

export default App;
